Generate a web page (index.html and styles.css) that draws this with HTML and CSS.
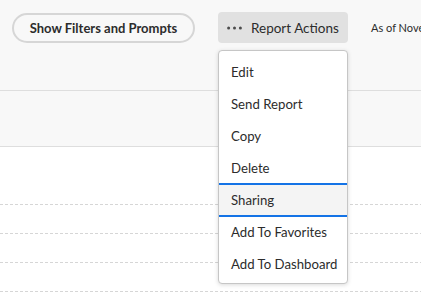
FILE: index.html
```html
<!DOCTYPE html>
<html>
<head>
<meta charset="utf-8">
<link rel="stylesheet" href="styles.css">
</head>
<body>
<div class="page">
  <header class="header">
    <button class="pill">Show Filters and Prompts</button>
    <div class="actions">
      <button class="actions-btn">
        <svg class="dots" width="15" height="4" viewBox="0 0 15 4"><circle cx="1.6" cy="2" r="1.5"/><circle cx="7.5" cy="2" r="1.5"/><circle cx="13.4" cy="2" r="1.5"/></svg>
        <span>Report Actions</span>
      </button>
      <ul class="menu">
        <li class="item">Edit</li>
        <li class="item">Send Report</li>
        <li class="item">Copy</li>
        <li class="item">Delete</li>
        <li class="item focused">Sharing</li>
        <li class="item">Add To Favorites</li>
        <li class="item">Add To Dashboard</li>
      </ul>
    </div>
    <span class="asof">As of November 14, 2023</span>
  </header>
  <div class="toolbar"></div>
  <div class="table">
    <div class="row head"></div>
    <div class="row"></div>
    <div class="row"></div>
    <div class="row"></div>
  </div>
</div>
</body>
</html>
```

FILE: styles.css
```css
html, body {
  margin: 0;
  padding: 0;
  background: #ffffff;
  overflow: hidden;
}
.page {
  width: 421px;
  height: 292px;
  overflow: hidden;
  font-family: "Lato", "Open Sans", sans-serif;
  color: #2c2c2c;
}
.header {
  position: relative;
  z-index: 1;
  height: 91px;
  box-sizing: border-box;
  background: #f8f8f8;
  border-bottom: 1px solid #dedede;
  display: flex;
  align-items: flex-start;
  padding: 12px 0 0 12px;
  gap: 23px;
  white-space: nowrap;
}
.pill {
  flex-shrink: 0;
  margin-top: 1px;
  height: 30px;
  width: 183px;
  box-sizing: border-box;
  border: 2px solid #d6d6d6;
  border-radius: 15px;
  background: #f8f8f8;
  font-family: inherit;
  font-size: 13px;
  font-weight: 700;
  color: #2c2c2c;
  padding: 0;
}
.actions {
  flex-shrink: 0;
  position: relative;
}
.actions-btn {
  height: 31px;
  width: 130px;
  box-sizing: border-box;
  border: none;
  border-radius: 4px;
  background: #e1e1e1;
  display: flex;
  align-items: center;
  padding: 0 0 0 9px;
  gap: 9px;
  font-family: inherit;
  font-size: 13.5px;
  color: #2c2c2c;
}
.dots {
  fill: #4b4b4b;
}
.menu {
  position: absolute;
  top: 38px;
  left: 0;
  width: 130px;
  box-sizing: border-box;
  margin: 0;
  padding: 5px 0 3px;
  list-style: none;
  background: #ffffff;
  border: 1px solid #c6c6c6;
  border-radius: 4px;
  box-shadow: 0 1px 4px rgba(0, 0, 0, 0.15);
  z-index: 2;
}
.item {
  height: 32px;
  line-height: 32px;
  padding-left: 12px;
  font-size: 13.2px;
  color: #2c2c2c;
}
.item.focused {
  background: #f4f4f4;
  box-shadow: inset 0 1px 0 #1473e6, 0 -1px 0 #1473e6, inset 0 -1px 0 #1473e6, 0 1px 0 #1473e6;
}
.asof {
  flex-shrink: 0;
  margin-top: 9px;
  font-size: 11px;
  color: #2c2c2c;
}
.toolbar {
  height: 56px;
  box-sizing: border-box;
  background: #f8f8f8;
  border-bottom: 1px solid #dedede;
}
.table {
  background: #ffffff;
}
.row {
  height: 29px;
  background-image: repeating-linear-gradient(to right, #d6d6d6 0 3px, transparent 3px 5px);
  background-size: 100% 1px;
  background-repeat: no-repeat;
  background-position: bottom left;
}
.row.head {
  height: 58px;
}
```
